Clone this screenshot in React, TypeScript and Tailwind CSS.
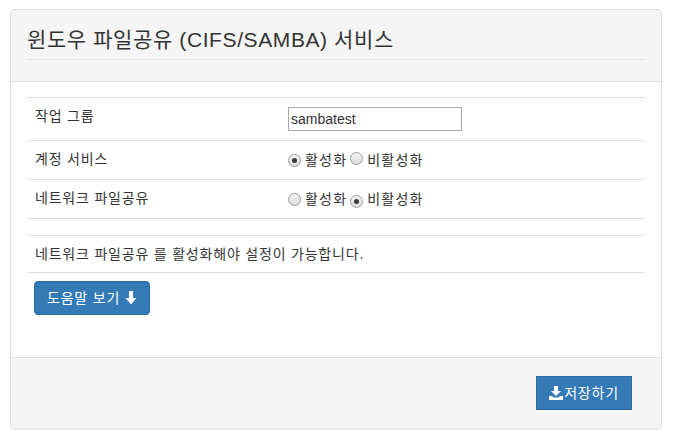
import React from "react";

const font = { fontFamily: '"Liberation Sans", "Noto Sans CJK KR", Arial, sans-serif' };

function Radio({ checked }: { checked?: boolean }) {
  return (
    <span className="inline-flex items-center justify-center w-[13px] h-[13px] rounded-full border border-[#9a9a9a] bg-gradient-to-b from-[#f4f4f4] to-[#dcdcdc] shrink-0">
      {checked && <span className="w-[5px] h-[5px] rounded-full bg-[#3a3a3a]" />}
    </span>
  );
}

function RadioGroup({ first }: { first: boolean }) {
  return (
    <div className="flex items-center text-[14px] text-[#333] tracking-[1.2px]">
      <Radio checked={first} />
      <span className="ml-[4px]">활성화</span>
      <span className="ml-[3px]"><Radio checked={!first} /></span>
      <span className="ml-[4px]">비활성화</span>
    </div>
  );
}

export default function App() {
  return (
    <div className="w-[673px] h-[441px] bg-white pt-[9px] pl-[10px]" style={font}>
      <div className="w-[652px] h-[420px] border border-[#ddd] rounded-[4px] flex flex-col overflow-hidden shadow-[0_1px_1px_rgba(0,0,0,0.05)]">
        {/* header */}
        <div className="h-[72px] bg-[#f5f5f5] border-b border-[#ddd] px-[16px] pt-[9px] shrink-0">
          <div className="border-b border-[#e5e5e5] h-[41px] flex items-center">
            <h1 className="text-[21px] text-[#333] leading-none tracking-[0.6px]">윈도우 파일공유 (CIFS/SAMBA) 서비스</h1>
          </div>
        </div>
        {/* body */}
        <div className="flex-1 bg-white px-[16px] pt-[15px] tracking-[0.8px]">
          <div className="border-t border-[#ddd]">
            <div className="h-[43px] border-b border-[#ddd] flex items-center">
              <div className="w-[261px] pl-[8px] text-[14px] text-[#333] -mt-[5px]">작업 그룹</div>
              <input
                readOnly
                value="sambatest"
                className="w-[174px] h-[24px] border border-[#a9a9a9] px-[2px] text-[14px] text-[#333] outline-none tracking-normal"
                style={{ fontFamily: '"Liberation Sans", Arial, sans-serif' }}
              />
            </div>
            <div className="h-[39px] border-b border-[#ddd] flex items-center">
              <div className="w-[261px] pl-[8px] text-[14px] text-[#333] -mt-[2px]">계정 서비스</div>
              <RadioGroup first={true} />
            </div>
            <div className="h-[39px] border-b border-[#ddd] flex items-center">
              <div className="w-[261px] pl-[8px] text-[14px] text-[#333] -mt-[2px]">네트워크 파일공유</div>
              <RadioGroup first={false} />
            </div>
          </div>
          <div className="h-[16px]" />
          <div className="border-t border-b border-[#ddd] h-[38px] flex items-center pl-[8px] text-[14px] text-[#333]">
            네트워크 파일공유 를 활성화해야 설정이 가능합니다.
          </div>
          <button className="mt-[8px] ml-[7px] h-[34px] px-[12px] bg-[#337ab7] border border-[#2e6da4] rounded-[4px] text-white text-[14px] flex items-center gap-[5px] tracking-[0.8px]">
            <span>도움말 보기</span>
            <svg width="12" height="14" viewBox="0 0 12 14">
              <path d="M4 0h4v7h3.5L6 13.5 0.5 7H4z" fill="white" />
            </svg>
          </button>
        </div>
        {/* footer */}
        <div className="h-[71px] bg-[#f5f5f5] border-t border-[#ddd] shrink-0 flex justify-end pr-[29px] pt-[18px]">
          <button className="h-[34px] w-[96px] bg-[#337ab7] border border-[#2e6da4] text-white text-[14px] flex items-center justify-center tracking-[0.8px]">
            <svg width="14" height="14" viewBox="0 0 14 14" className="mr-[1px]">
              <path d="M5 0h4v5h3L7 10 2 5h3z" fill="white" />
              <path d="M0 10h3l1.5 1.5h5L11 10h3v4H0z" fill="white" />
            </svg>
            <span>저장하기</span>
          </button>
        </div>
      </div>
    </div>
  );
}
